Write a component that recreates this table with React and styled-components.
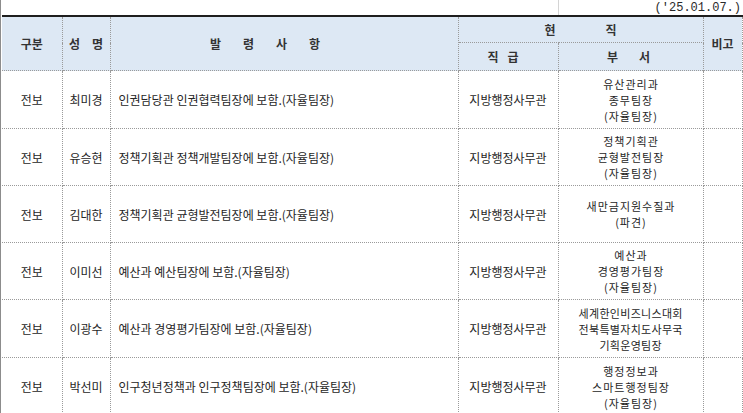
import React from "react";
import styled, { createGlobalStyle } from "styled-components";

const Global = createGlobalStyle`
  html, body { margin: 0; padding: 0; background: #fff; }
  body {
    width: 743px; height: 413px; overflow: hidden;
    font-family: "Noto Sans CJK KR", "Noto Sans", sans-serif;
    color: #262626;
  }
`;

const Page = styled.div`
  width: 743px;
  height: 413px;
  padding-left: 1px;
  box-sizing: border-box;
  border-left: 1px solid #8c8c8c;
  display: flex;
  flex-direction: column;
`;

const DateBar = styled.div`
  height: 15px;
  display: flex;
  align-items: stretch;
`;

const GridGap = styled.div`
  width: 556px;
  border-right: 1px solid #d4d4d4;
  flex: none;
`;

const DateText = styled.div`
  flex: 1;
  text-align: right;
  padding-right: 2px;
  font-family: "Liberation Mono", "DejaVu Sans Mono", monospace;
  font-size: 12px;
  line-height: 16px;
  color: #2a2a2a;
`;

const Table = styled.table`
  width: 740px;
  border-collapse: collapse;
  table-layout: fixed;
  border-top: 2px solid #1e1e1e;
  font-size: 12px;
`;

const HeadCell = styled.th`
  background: #dde8f4;
  font-weight: 700;
  color: #333;
  text-align: center;
  vertical-align: middle;
  padding: 0;
  height: ${(p) => p.$h || 25}px;
  border: 1px dotted #9a9a9a;
  border-top: none;
  &:first-child { border-left: none; }
`;

const Spread = styled.span`
  display: inline-flex;
  gap: ${(p) => p.$gap || 0}px;
  margin-right: ${(p) => p.$shift || 0}px;
`;

const Row = styled.tr`
  height: ${(p) => p.$h}px;
`;

const Cell = styled.td`
  padding: 0;
  padding-left: ${(p) => (p.$left ? 8 : 0)}px;
  text-align: ${(p) => (p.$left ? "left" : "center")};
  vertical-align: middle;
  border: 1px dotted #9a9a9a;
  white-space: nowrap;
  line-height: 15px;
  &:first-child { border-left: none; }
`;

const DeptLine = styled.div`
  font-size: 11px;
  height: 16px;
  line-height: 16px;
  letter-spacing: ${(p) => (p.$tight ? "0.3px" : "1px")};
  text-indent: ${(p) => (p.$tight ? "0.3px" : "1px")};
`;

const rows = [
  { name: "최미경", order: "인권담당관 인권협력팀장에 보함.(자율팀장)", dept: ["유산관리과", "종무팀장", "(자율팀장)"], h: 58 },
  { name: "유승현", order: "정책기획관 정책개발팀장에 보함.(자율팀장)", dept: ["정책기획관", "균형발전팀장", "(자율팀장)"], h: 57 },
  { name: "김대한", order: "정책기획관 균형발전팀장에 보함.(자율팀장)", dept: ["새만금지원수질과", "(파견)"], h: 57 },
  { name: "이미선", order: "예산과 예산팀장에 보함.(자율팀장)", dept: ["예산과", "경영평가팀장", "(자율팀장)"], h: 57 },
  { name: "이광수", order: "예산과 경영평가팀장에 보함.(자율팀장)", dept: ["세계한인비즈니스대회", "전북특별자치도사무국", "기획운영팀장"], h: 58, tight: true },
  { name: "박선미", order: "인구청년정책과 인구정책팀장에 보함.(자율팀장)", dept: ["행정정보과", "스마트행정팀장", "(자율팀장)"], h: 58 },
];

const chars = (s) => s.split("").map((c, i) => <span key={i}>{c}</span>);

export default function App() {
  return (
    <>
      <Global />
      <Page>
        <DateBar>
          <GridGap />
          <DateText>('25.01.07.)</DateText>
        </DateBar>
        <Table>
          <colgroup>
            <col style={{ width: 60 }} />
            <col style={{ width: 48 }} />
            <col style={{ width: 348 }} />
            <col style={{ width: 100 }} />
            <col style={{ width: 145 }} />
            <col style={{ width: 39 }} />
          </colgroup>
          <thead>
            <tr>
              <HeadCell rowSpan={2} $h={25}>구분</HeadCell>
              <HeadCell rowSpan={2}><Spread $gap={12}>{chars("성명")}</Spread></HeadCell>
              <HeadCell rowSpan={2}><Spread $gap={22} $shift={38}>{chars("발령사항")}</Spread></HeadCell>
              <HeadCell colSpan={2} $h={25}><Spread $gap={50}>{chars("현직")}</Spread></HeadCell>
              <HeadCell rowSpan={2}>비고</HeadCell>
            </tr>
            <tr>
              <HeadCell $h={27}><Spread $gap={9} $shift={10}>{chars("직급")}</Spread></HeadCell>
              <HeadCell $h={27}><Spread $gap={21} $shift={4}>{chars("부서")}</Spread></HeadCell>
            </tr>
          </thead>
          <tbody>
            {rows.map((r) => (
              <Row key={r.name} $h={r.h}>
                <Cell>전보</Cell>
                <Cell>{r.name}</Cell>
                <Cell $left>{r.order}</Cell>
                <Cell>지방행정사무관</Cell>
                <Cell>
                  {r.dept.map((d, i) => (
                    <DeptLine key={i} $tight={r.tight}>{d}</DeptLine>
                  ))}
                </Cell>
                <Cell />
              </Row>
            ))}
          </tbody>
        </Table>
      </Page>
    </>
  );
}
